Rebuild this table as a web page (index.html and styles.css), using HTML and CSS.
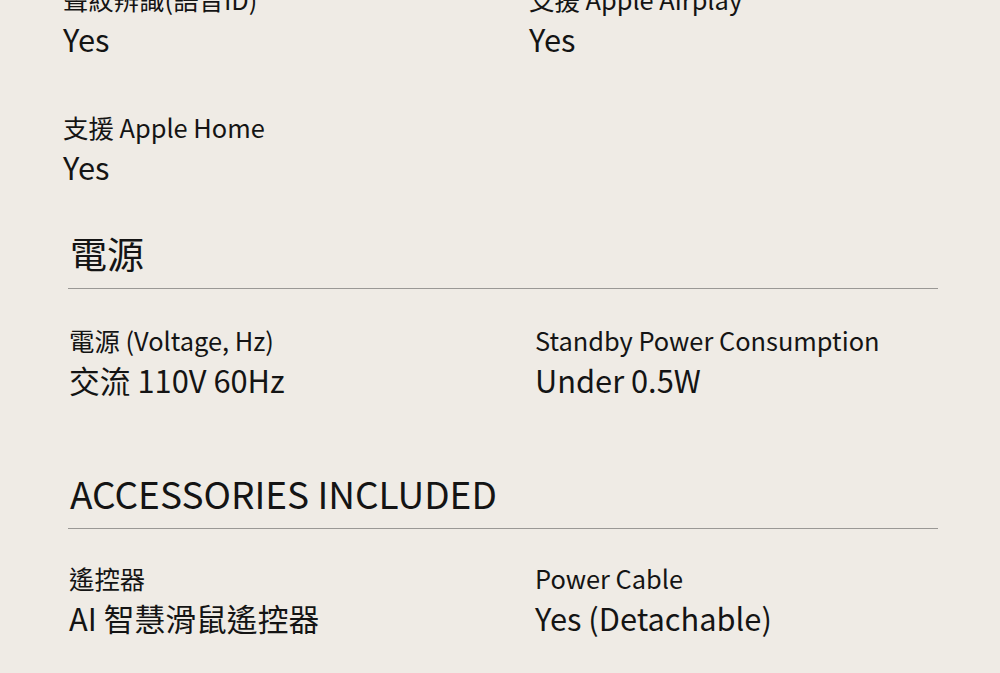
FILE: index.html
```html
<!DOCTYPE html>
<html lang="zh-Hant">
<head>
<meta charset="utf-8">
<title>Specs</title>
<link rel="stylesheet" href="styles.css">
</head>
<body>
<div class="page">
  <section class="specs specs--top">
    <div class="grid">
      <div class="item"><div class="label">聲紋辨識(語音ID)</div><div class="value">Yes</div></div>
      <div class="item"><div class="label">支援 Apple Airplay</div><div class="value">Yes</div></div>
      <div class="item"><div class="label">支援 Apple Home</div><div class="value">Yes</div></div>
    </div>
  </section>
  <section class="specs specs--power">
    <h2 class="heading">電源</h2>
    <div class="grid">
      <div class="item"><div class="label">電源 (Voltage, Hz)</div><div class="value">交流 110V 60Hz</div></div>
      <div class="item"><div class="label">Standby Power Consumption</div><div class="value">Under 0.5W</div></div>
    </div>
  </section>
  <section class="specs specs--acc">
    <h2 class="heading">ACCESSORIES INCLUDED</h2>
    <div class="grid">
      <div class="item"><div class="label">遙控器</div><div class="value">AI 智慧滑鼠遙控器</div></div>
      <div class="item"><div class="label">Power Cable</div><div class="value">Yes (Detachable)</div></div>
    </div>
  </section>
</div>
</body>
</html>
```

FILE: styles.css
```css
html, body {
  margin: 0;
  padding: 0;
  background: #efebe5;
}
body {
  font-family: "Noto Sans CJK TC", "Noto Sans", sans-serif;
  color: #141414;
}
.page {
  width: 870px;
  margin-left: 68px;
  margin-top: -20px;
}
.specs--top {
  margin-left: -5px;
}
.grid {
  display: grid;
  grid-template-columns: 466px 1fr;
  row-gap: 48px;
}
.label {
  font-size: 25.4px;
  line-height: 38px;
  height: 38px;
  white-space: nowrap;
}
.value {
  font-size: 30.8px;
  line-height: 42px;
  height: 42px;
  white-space: nowrap;
}
.heading {
  margin: 0;
  font-weight: 400;
  font-size: 37px;
  line-height: 50px;
  padding: 0 0 10px 2px;
  border-bottom: 1px solid #9a9895;
}
.specs--power {
  margin-top: 40px;
}
.specs--power .grid {
  margin-top: 32px;
  padding-left: 1px;
}
.specs--acc .grid {
  margin-top: 30px;
  padding-left: 1px;
}
.specs--acc {
  margin-top: 67px;
}
```
